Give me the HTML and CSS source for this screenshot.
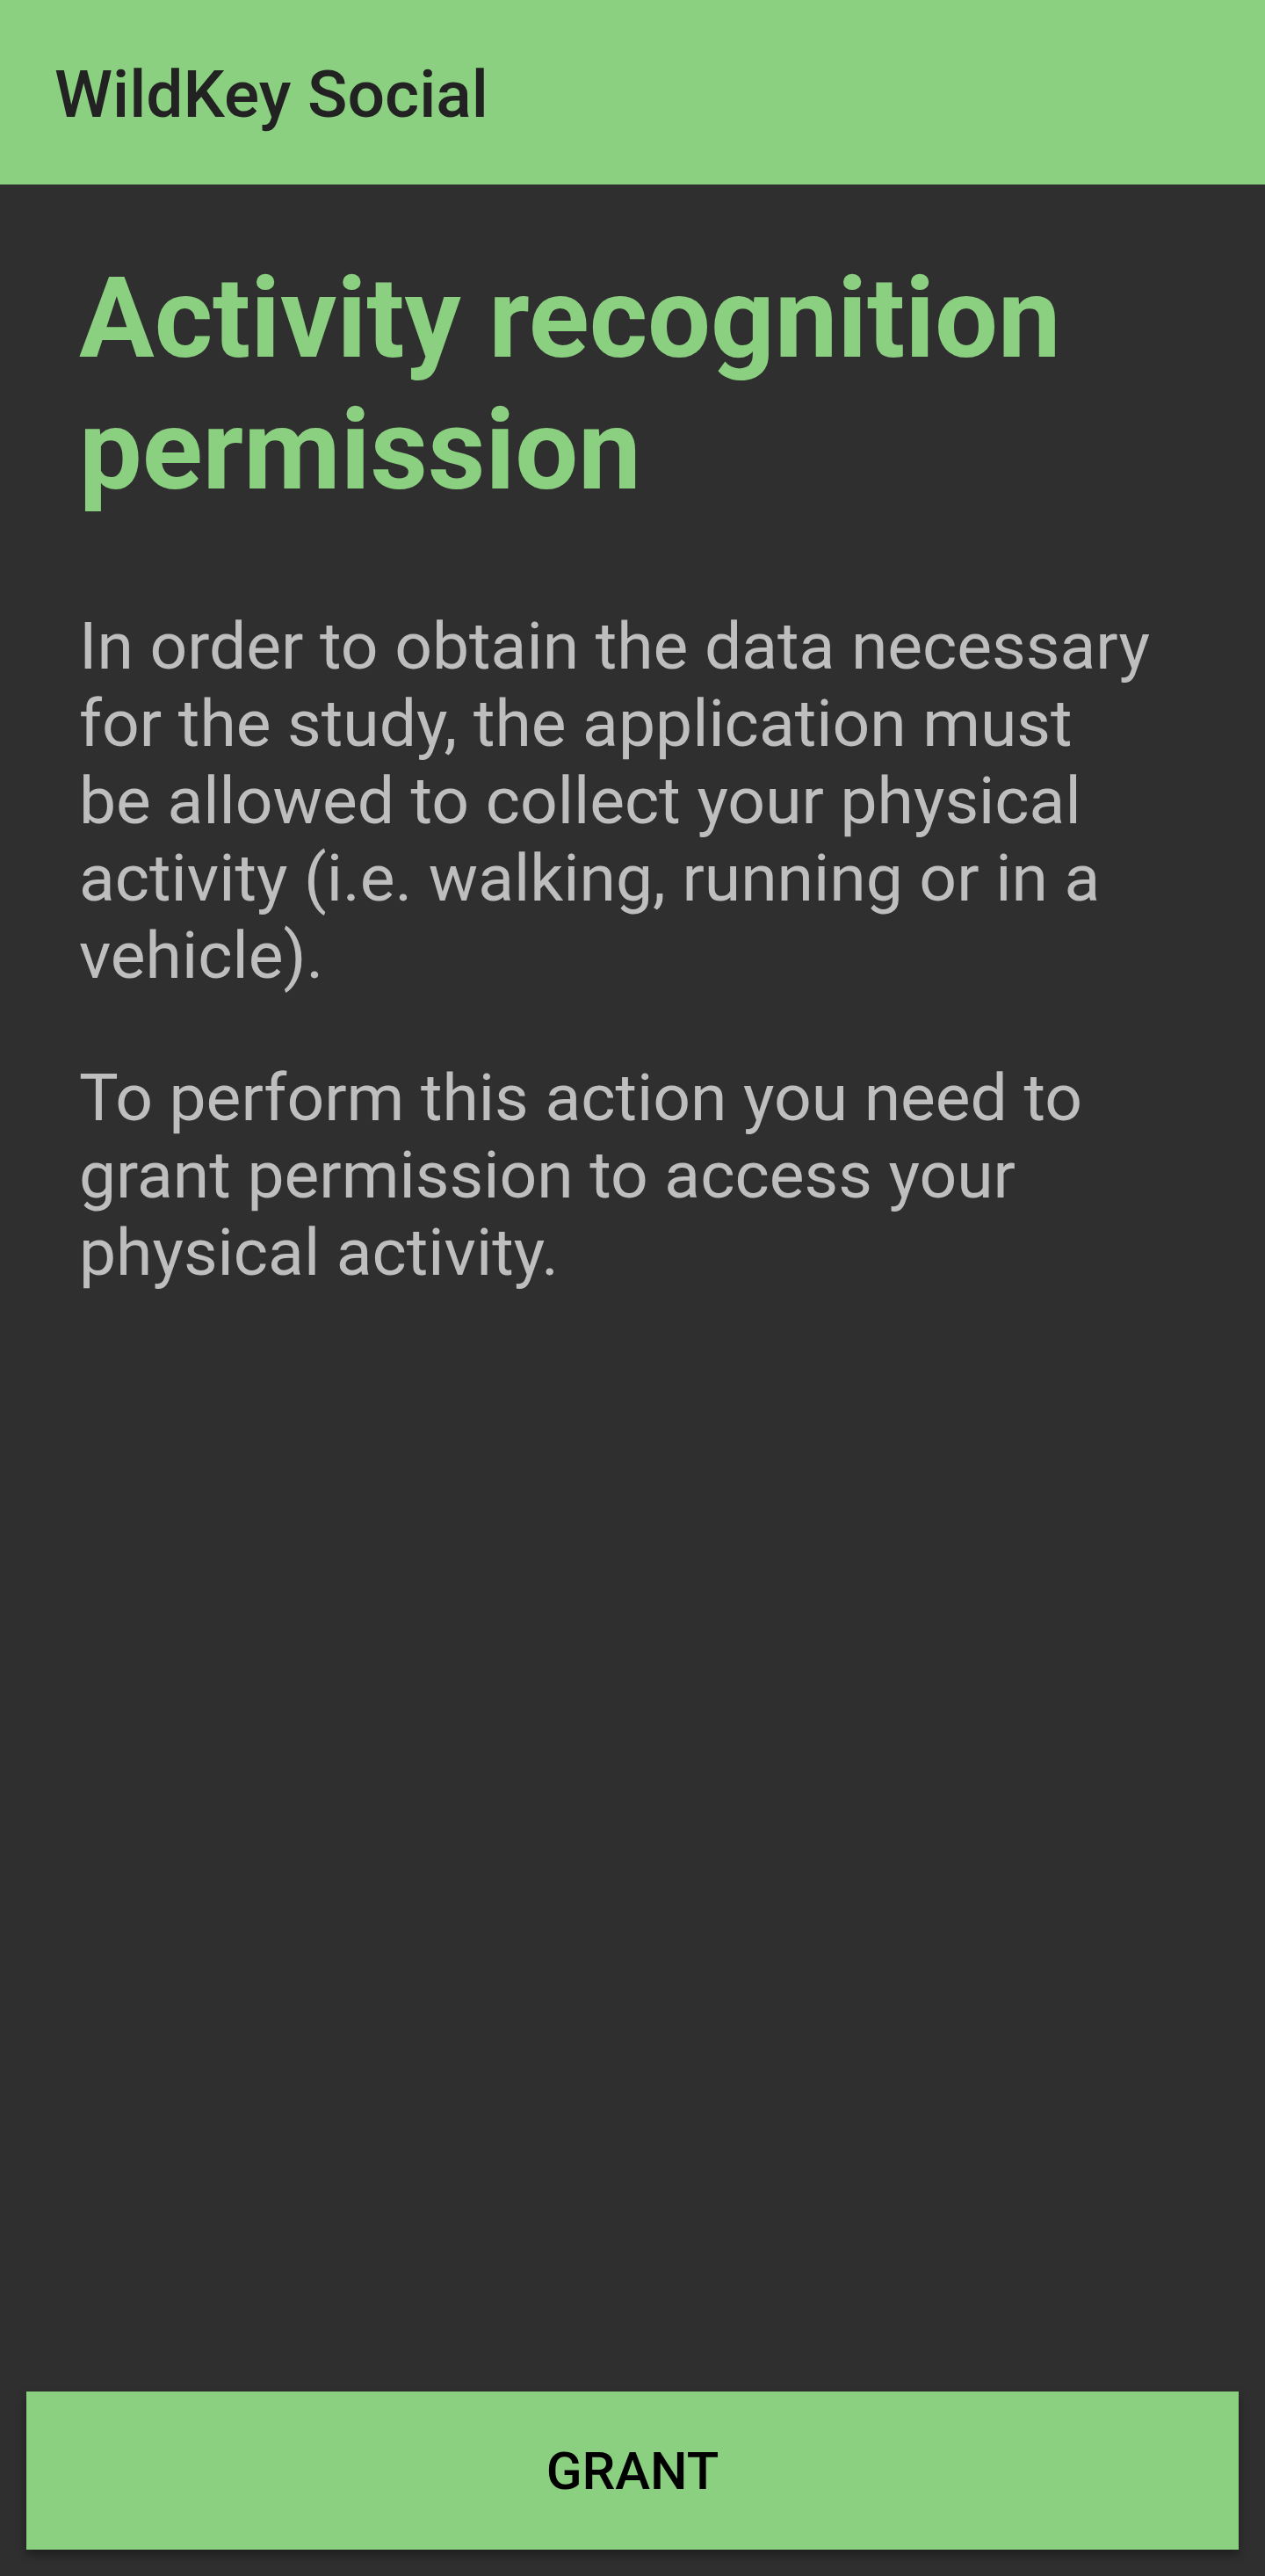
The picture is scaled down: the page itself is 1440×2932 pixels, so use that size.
FILE: index.html
```html
<!DOCTYPE html>
<html lang="en">
<head>
<meta charset="utf-8">
<title>WildKey Social</title>
<link rel="stylesheet" href="styles.css">
</head>
<body>
<div class="app">
  <header class="toolbar">
    <h1 class="toolbar-title">WildKey Social</h1>
  </header>
  <main class="content">
    <h2 class="headline">Activity recognition permission</h2>
    <p class="body-text">In order to obtain the data necessary for the study, the application must be allowed to collect your physical activity (i.e. walking, running or in a vehicle).</p>
    <p class="body-text">To perform this action you need to grant permission to access your physical activity.</p>
  </main>
  <div class="actions">
    <button class="grant-btn" type="button">GRANT</button>
  </div>
</div>
</body>
</html>
```

FILE: styles.css
```css
html, body {
  margin: 0;
  padding: 0;
  background: #2f2f2f;
}

body {
  font-family: Roboto, "Noto Sans", "Liberation Sans", sans-serif;
}

.app {
  width: 1440px;
  height: 2932px;
  display: flex;
  flex-direction: column;
  background: #2f2f2f;
}

.toolbar {
  height: 210px;
  flex: 0 0 210px;
  background: #8bcf80;
  display: flex;
  align-items: center;
  padding-left: 62px;
  box-sizing: border-box;
}

.toolbar-title {
  margin: 0;
  font-size: 75px;
  font-weight: 500;
  color: #222222;
  line-height: 1;
  padding-top: 4px;
}

.content {
  flex: 1;
  padding: 78px 90px 0 90px;
}

.headline {
  margin: 0 0 103px 0;
  font-size: 127.5px;
  line-height: 150px;
  font-weight: 700;
  color: #8bcf80;
}

.body-text {
  max-width: 1225px;
  margin: 0 0 74px 0;
  font-size: 75px;
  line-height: 88px;
  font-weight: 400;
  color: #bebebe;
}

.actions {
  padding: 0 30px 30px 30px;
}

.grant-btn {
  display: block;
  width: 100%;
  height: 180px;
  border: none;
  border-radius: 0;
  background: #8bcf80;
  color: #000000;
  font-family: Roboto, "Noto Sans", "Liberation Sans", sans-serif;
  font-size: 60px;
  font-weight: 500;
  letter-spacing: 0;
  box-shadow: 0 6px 10px rgba(0, 0, 0, 0.35);
}
```
